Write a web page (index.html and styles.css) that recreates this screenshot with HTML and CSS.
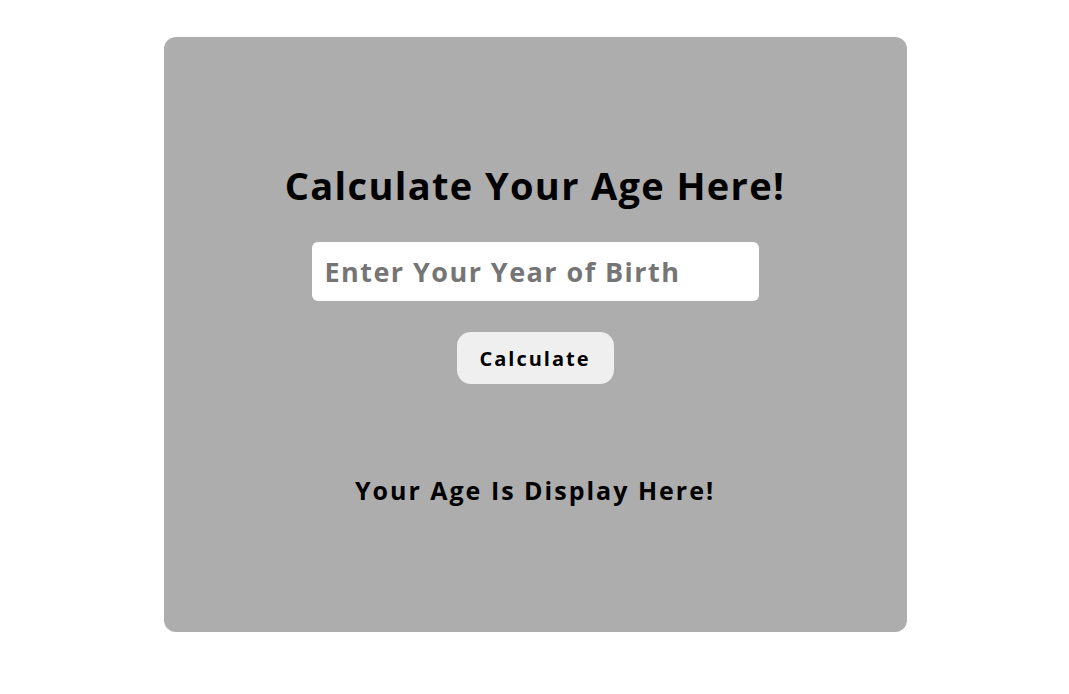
FILE: index.html
```html
<!DOCTYPE html>
<html>
<head>
<meta charset="utf-8">
<link rel="stylesheet" href="styles.css">
</head>
<body>
<main class="card">
  <h1 class="title">Calculate Your Age Here!</h1>
  <input class="year" type="text" placeholder="Enter Your Year of Birth">
  <button class="calc">Calculate</button>
  <p class="result">Your Age Is Display Here!</p>
</main>
</body>
</html>
```
FILE: styles.css
```css
html, body {
  margin: 0;
  padding: 0;
  background: #ffffff;
}
body {
  padding-top: 37px;
  padding-left: 1px;
  font-family: "Open Sans", "DejaVu Sans", sans-serif;
}
.card {
  box-sizing: border-box;
  width: 743px;
  height: 595px;
  margin: 0 auto;
  background: #adadad;
  border-radius: 12px;
  display: flex;
  flex-direction: column;
  align-items: center;
  padding-top: 123px;
}
.title {
  margin: 0;
  font-size: 38px;
  line-height: 50px;
  font-weight: 700;
  letter-spacing: 1.35px;
  color: #000;
}
.year {
  box-sizing: border-box;
  margin-top: 32px;
  width: 447px;
  height: 59px;
  border: none;
  border-radius: 6px;
  background: #fff;
  padding: 0 13px;
  font-family: inherit;
  font-size: 27px;
  font-weight: 700;
  letter-spacing: 1.45px;
  outline: none;
}
.year::placeholder {
  color: #757575;
}
.calc {
  margin-top: 31px;
  width: 157px;
  height: 52px;
  border: none;
  border-radius: 14px;
  background: #efefef;
  font-family: inherit;
  font-size: 20px;
  font-weight: 700;
  letter-spacing: 2px;
  color: #000;
}
.result {
  margin: 90px 0 0;
  font-size: 25px;
  line-height: 32px;
  font-weight: 700;
  letter-spacing: 2px;
  color: #000;
}
```
